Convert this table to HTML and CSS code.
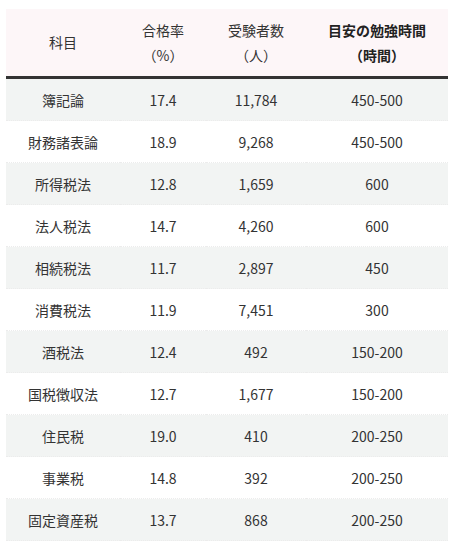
FILE: index.html
```html
<!DOCTYPE html>
<html lang="ja">
<head>
<meta charset="utf-8">
<link rel="stylesheet" href="styles.css">
</head>
<body>
<table class="exam-table">
  <thead>
    <tr>
      <th class="col-subject">科目</th>
      <th class="col-rate">合格率<br>（%）</th>
      <th class="col-count">受験者数<br>（人）</th>
      <th class="col-hours strong">目安の勉強時間<br>（時間）</th>
    </tr>
  </thead>
  <tbody>
    <tr><td>簿記論</td><td>17.4</td><td>11,784</td><td>450-500</td></tr>
    <tr><td>財務諸表論</td><td>18.9</td><td>9,268</td><td>450-500</td></tr>
    <tr><td>所得税法</td><td>12.8</td><td>1,659</td><td>600</td></tr>
    <tr><td>法人税法</td><td>14.7</td><td>4,260</td><td>600</td></tr>
    <tr><td>相続税法</td><td>11.7</td><td>2,897</td><td>450</td></tr>
    <tr><td>消費税法</td><td>11.9</td><td>7,451</td><td>300</td></tr>
    <tr><td>酒税法</td><td>12.4</td><td>492</td><td>150-200</td></tr>
    <tr><td>国税徴収法</td><td>12.7</td><td>1,677</td><td>150-200</td></tr>
    <tr><td>住民税</td><td>19.0</td><td>410</td><td>200-250</td></tr>
    <tr><td>事業税</td><td>14.8</td><td>392</td><td>200-250</td></tr>
    <tr><td>固定資産税</td><td>13.7</td><td>868</td><td>200-250</td></tr>
  </tbody>
</table>
</body>
</html>
```

FILE: styles.css
```css
html, body {
  margin: 0;
  padding: 0;
  background: #ffffff;
}
body {
  padding: 9px 2px 0 6px;
  font-family: "Noto Sans CJK JP", "Noto Sans", sans-serif;
  font-size: 14px;
  color: #333333;
}
.exam-table {
  width: 442px;
  border-collapse: collapse;
  table-layout: fixed;
}
.exam-table th {
  background: #fdf6f8;
  font-weight: normal;
  line-height: 25px;
  height: 67px;
  padding: 0;
  text-align: center;
  vertical-align: middle;
  border-bottom: 3px solid #333333;
}
.exam-table th.strong {
  font-weight: bold;
  color: #222222;
}
.col-subject { width: 114px; }
.col-rate { width: 86px; }
.col-count { width: 100px; }
.col-hours { width: 142px; }
.exam-table td {
  height: 41px;
  padding: 0;
  text-align: center;
  vertical-align: middle;
  line-height: 20px;
  border-bottom: 1px dotted #ececec;
}
.exam-table tbody tr:nth-child(odd) td {
  background: #f2f4f3;
}
```
